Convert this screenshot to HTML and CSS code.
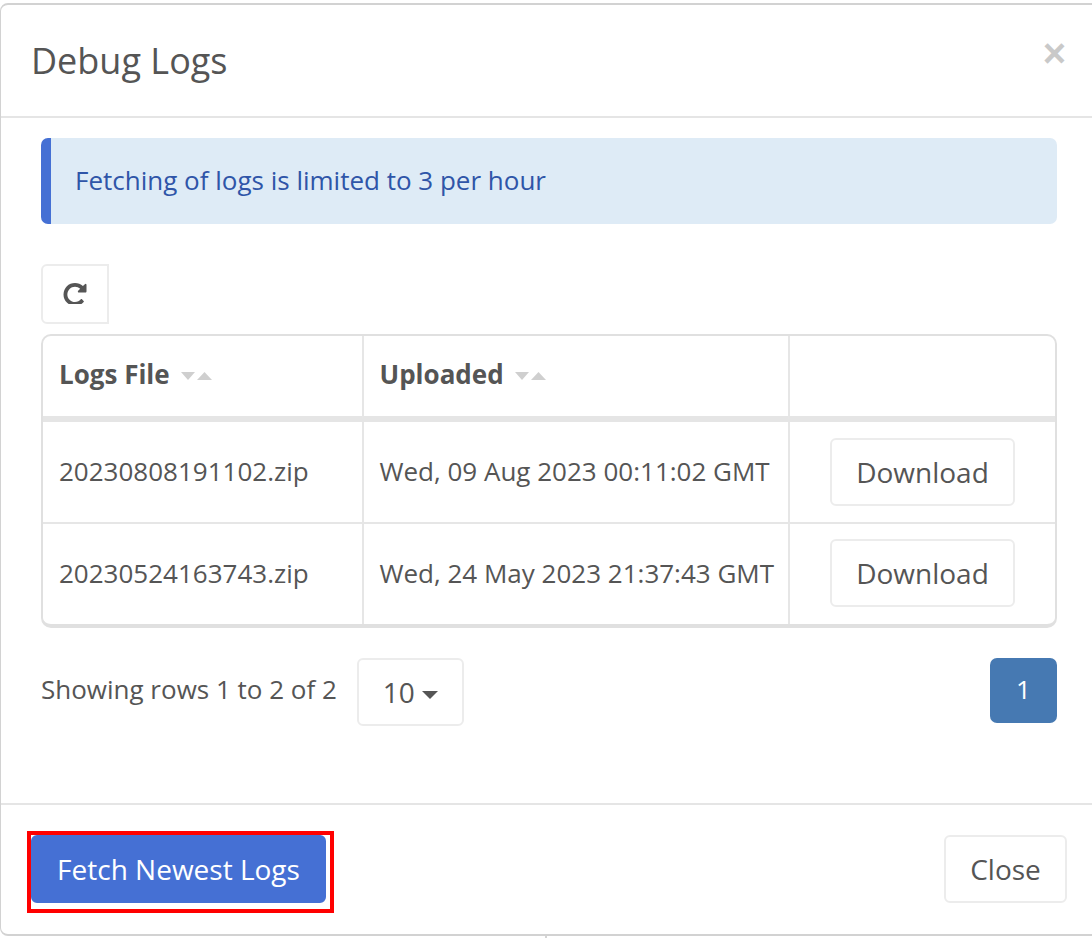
FILE: index.html
```html
<!DOCTYPE html>
<html lang="en">
<head>
<meta charset="utf-8">
<title>Debug Logs</title>
<link rel="stylesheet" href="styles.css">
</head>
<body>
<div class="page">
  <div class="backdrop-tick"></div>
  <section class="modal">
    <header class="modal-header">
      <h2 class="modal-title">Debug Logs</h2>
      <span class="modal-close">×</span>
    </header>
    <div class="modal-body">
      <div class="alert">Fetching of logs is limited to 3 per hour</div>
      <div class="toolbar">
        <button class="btn btn-refresh" type="button" aria-label="Refresh">
          <svg class="icon-refresh" viewBox="0 0 1536 1536"><path d="M1536 256v448q0 26-19 45t-45 19h-448q-42 0-59-40-17-39 14-69l138-138q-148-137-349-137-104 0-198.500 40.500t-163.500 109.500-109.500 163.500-40.500 198.500 40.500 198.500 109.500 163.500 163.500 109.500 198.500 40.500q119 0 225-52t179-147q7-10 23-12 15 0 25 9l137 138q9 8 9.500 20.500t-7.500 22.500q-109 132-264 204.500t-327 72.500q-156 0-298-61t-245-164-164-245-61-298 61-298 164-245 245-164 298-61q147 0 284.500 55.500t244.500 156.500l130-129q29-31 70-14 39 17 39 59z"/></svg>
        </button>
      </div>
      <div class="table-wrap">
        <table class="logs">
          <thead>
            <tr>
              <th class="col-file">Logs File <svg class="sort" viewBox="0 0 31 9"><polygon points="0,1 14,1 7,9"/><polygon points="16,9 31,9 23.500,1"/></svg></th>
              <th class="col-date">Uploaded <svg class="sort" viewBox="0 0 31 9"><polygon points="0,1 14,1 7,9"/><polygon points="16,9 31,9 23.500,1"/></svg></th>
              <th class="col-action"></th>
            </tr>
          </thead>
          <tbody>
            <tr>
              <td>20230808191102.zip</td>
              <td class="cell-date">Wed, 09 Aug 2023 00:11:02 GMT</td>
              <td class="cell-action"><button class="btn btn-download" type="button">Download</button></td>
            </tr>
            <tr>
              <td>20230524163743.zip</td>
              <td class="cell-date">Wed, 24 May 2023 21:37:43 GMT</td>
              <td class="cell-action"><button class="btn btn-download" type="button">Download</button></td>
            </tr>
          </tbody>
        </table>
      </div>
      <div class="pager">
        <span class="pager-info">Showing rows 1 to 2 of 2</span>
        <button class="btn btn-size" type="button">10 <span class="caret"></span></button>
        <span class="page-current">1</span>
      </div>
    </div>
    <footer class="modal-footer">
      <button class="btn btn-primary" type="button">Fetch Newest Logs</button>
      <button class="btn btn-close" type="button">Close</button>
    </footer>
  </section>
  <div class="highlight"></div>
</div>
</body>
</html>
```
FILE: styles.css
```css
* { box-sizing: border-box; }
html, body { margin: 0; padding: 0; background: #fff; }
body {
  font-family: "Open Sans", "Noto Sans", sans-serif;
  font-size: 26px;
  color: #555;
}
.page {
  position: relative;
  width: 1092px;
  height: 938px;
  overflow: hidden;
  padding-top: 3px;
}
.backdrop-tick {
  position: absolute;
  left: 545px;
  top: 930px;
  width: 2px;
  height: 8px;
  background: #d4d4d4;
}
.modal {
  position: relative;
  width: 1100px;
  height: 933px;
  background: #fff;
  border: 2px solid #d2d2d2;
  border-left-width: 1px;
  border-radius: 8px;
  display: flex;
  flex-direction: column;
}
.modal-header {
  height: 113px;
  border-bottom: 2px solid #e5e5e5;
  display: flex;
  justify-content: space-between;
  align-items: flex-start;
  padding: 0 32px 0 30px;
}
.modal-title {
  margin: 32px 0 0;
  font-size: 36px;
  line-height: 48px;
  font-weight: 400;
}
.modal-close {
  font-family: "Liberation Sans", Arial, sans-serif;
  font-size: 40px;
  line-height: 40px;
  font-weight: 700;
  color: #c9c9c9;
  margin-top: 28px;
}
.modal-body {
  height: 685px;
  padding: 20px 41px 0 40px;
}
.alert {
  height: 86px;
  background: #deebf6;
  border-left: 10px solid #4570d4;
  border-radius: 7px;
  color: #2f55a8;
  padding-left: 24px;
  line-height: 84px;
}
.toolbar {
  margin-top: 40px;
  height: 60px;
}
.btn {
  font: inherit;
  font-size: 28px;
  color: #555;
  background: #fff;
  border: 2px solid #ececec;
  border-radius: 6px;
  padding: 0;
}
.btn-refresh {
  width: 68px;
  height: 60px;
  border-radius: 6px 0 0 6px;
  padding-bottom: 3px;
  display: flex;
  align-items: center;
  justify-content: center;
}
.icon-refresh {
  width: 24px;
  height: 23px;
  fill: #555;
}
.table-wrap {
  margin-top: 10px;
  border: 2px solid #e0e0e0;
  border-bottom-width: 4px;
  border-radius: 10px;
  overflow: hidden;
}
.logs {
  width: 100%;
  border-collapse: separate;
  border-spacing: 0;
  table-layout: fixed;
}
.logs th, .logs td {
  padding: 0 0 0 16px;
  text-align: left;
  border-left: 2px solid #e6e6e6;
  white-space: nowrap;
}
.logs th:first-child, .logs td:first-child { border-left: 0; }
.logs th {
  height: 86px;
  padding-bottom: 5px;
  font-weight: 700;
  border-bottom: 6px solid #e5e5e5;
}
.logs .col-date, .logs .cell-date { padding-left: 15.5px; }
.col-file { width: 319px; }
.col-date { width: 426px; }
.logs td { height: 102px; border-bottom: 2px solid #e6e6e6; padding-bottom: 2px; }
.logs tr:last-child td { height: 100px; border-bottom: 0; padding-bottom: 2px; }
.logs .cell-action { padding: 0 0 0 40px; }
.sort {
  width: 31px;
  height: 9px;
  fill: #cfcfcf;
  margin-left: 5px;
  vertical-align: 4px;
}
.btn-download {
  display: block;
  width: 185px;
  height: 68px;
}
.pager {
  margin-top: 30px;
  display: flex;
  align-items: flex-start;
}
.pager-info {
  line-height: 62px;
  height: 64px;
}
.btn-size {
  width: 107px;
  height: 68px;
  margin-left: 20px;
}
.caret {
  display: inline-block;
  width: 0;
  height: 0;
  vertical-align: 4px;
  border-left: 8px solid transparent;
  border-right: 8px solid transparent;
  border-top: 8px solid #555;
}
.page-current {
  margin-left: auto;
  width: 67px;
  height: 65px;
  background: #4679b2;
  border-radius: 7px;
  color: #fff;
  text-align: center;
  line-height: 63px;
}
.modal-footer {
  height: 130px;
  border-top: 2px solid #e5e5e5;
  display: flex;
  justify-content: space-between;
  padding: 30px 31px 0 30px;
}
.btn-primary {
  width: 295px;
  height: 68px;
  background: #4570d4;
  border-color: #4570d4;
  color: #fff;
}
.btn-close {
  width: 123px;
  height: 68px;
}
.highlight {
  position: absolute;
  left: 27px;
  top: 831px;
  width: 307px;
  height: 82px;
  border: 4px solid #f00;
}
```
